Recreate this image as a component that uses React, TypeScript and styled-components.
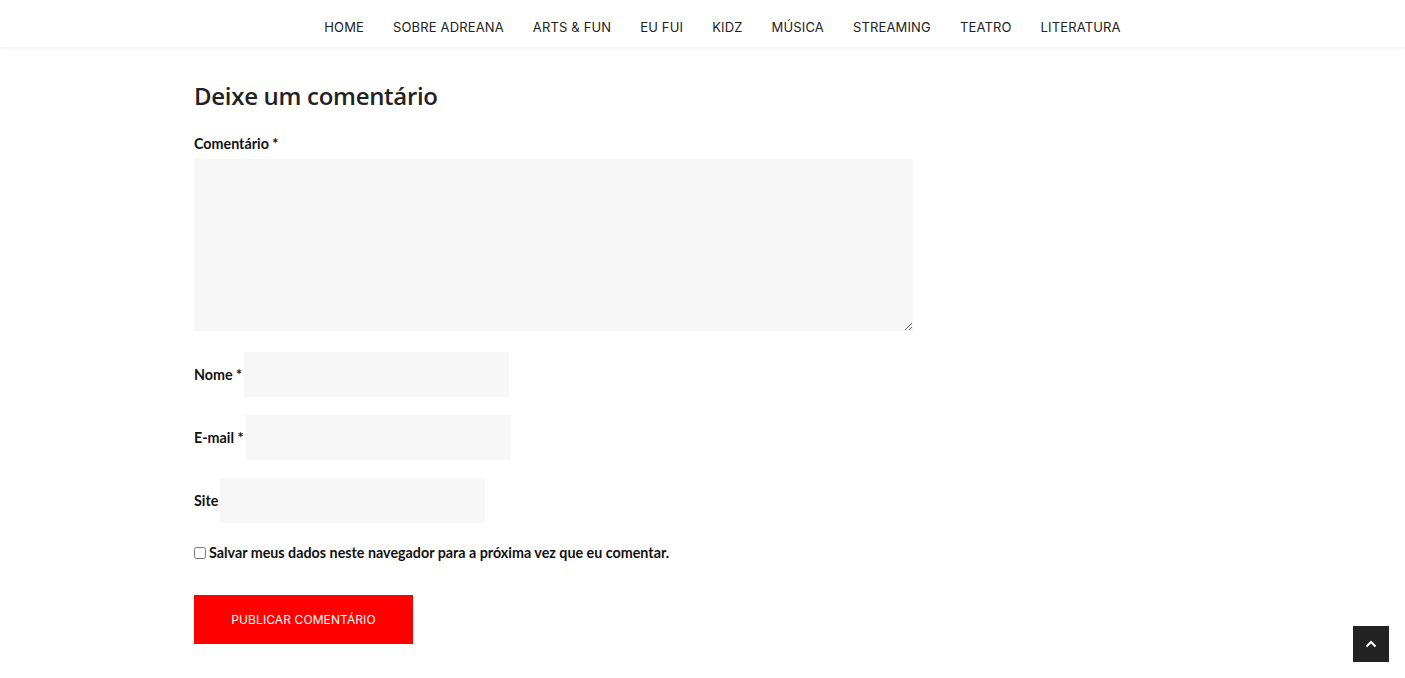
import React from "react";
import styled, { createGlobalStyle } from "styled-components";

const Global = createGlobalStyle`
  html, body { margin: 0; padding: 0; background: #fff; }
  body { font-family: Lato, "Liberation Sans", sans-serif; color: #111; }
  * { box-sizing: border-box; }
`;

const Header = styled.header`
  height: 47px;
  background: #fff;
  box-shadow: 0 1px 4px rgba(0,0,0,0.08);
  display: flex;
  justify-content: center;
  align-items: center;
  padding-left: 40px;
`;

const Nav = styled.nav`
  display: flex;
  gap: 29px;
  padding-top: 7px;
`;

const NavItem = styled.a`
  font-family: Inter, "Noto Sans", sans-serif;
  font-size: 13px;
  letter-spacing: 0.15px;
  color: #222;
  text-decoration: none;
  text-transform: uppercase;
`;

const Main = styled.main`
  width: 1017px;
  margin: 0 auto;
  padding-top: 32px;
  padding-bottom: 40px;
`;

const Title = styled.h3`
  font-family: "Open Sans", "Noto Sans", sans-serif;
  font-weight: 600;
  font-size: 24px;
  letter-spacing: -0.3px;
  color: #222;
  margin: 0 0 22px;
  line-height: 34px;
`;

const Field = styled.p`
  margin: 0 0 18px;
  font-size: 14.3px;
  font-weight: 700;
  display: flex;
  align-items: center;
`;

const BlockField = styled.div`
  display: flex;
  flex-direction: column;
  margin-bottom: 21px;
`;

const Label = styled.label`
  font-weight: 700;
  font-size: 14.3px;
  color: #111;
  margin-right: 2px;
`;

const BlockLabel = styled(Label)`
  margin-bottom: 7px;
  line-height: 17px;
`;

const TextArea = styled.textarea`
  width: 719px;
  height: 172px;
  background: #f7f7f7;
  border: none;
  outline: none;
  display: block;
`;

const Input = styled.input`
  width: 265px;
  height: 45px;
  background: #f7f7f7;
  border: none;
  outline: none;
`;

const CheckRow = styled.p`
  margin: 21px 0 34px;
  display: flex;
  align-items: center;
  font-size: 14.3px;
  font-weight: 700;
`;

const Check = styled.input`
  width: 12px;
  height: 12px;
  margin: 1px 3px 0 0;
`;

const Submit = styled.button`
  width: 219px;
  height: 49px;
  background: #ff0000;
  color: #fff;
  border: none;
  font-family: Inter, "Noto Sans", sans-serif;
  font-size: 12px;
  text-transform: uppercase;
  letter-spacing: 0.1px;
`;

const TopButton = styled.button`
  position: fixed;
  right: 16px;
  bottom: 16px;
  width: 36px;
  height: 36px;
  background: #222;
  border: none;
  display: flex;
  align-items: center;
  justify-content: center;
  padding: 0;
`;

const items = ["Home", "Sobre Adreana", "Arts & Fun", "Eu Fui", "Kidz", "Música", "Streaming", "Teatro", "Literatura"];

export default function App() {
  return (
    <>
      <Global />
      <Header>
        <Nav>
          {items.map((i) => (
            <NavItem key={i} href="#">{i}</NavItem>
          ))}
        </Nav>
      </Header>
      <Main>
        <Title>Deixe um comentário</Title>
        <BlockField>
          <BlockLabel>Comentário *</BlockLabel>
          <TextArea />
        </BlockField>
        <Field>
          <Label>Nome *</Label>
          <Input />
        </Field>
        <Field>
          <Label>E-mail *</Label>
          <Input />
        </Field>
        <Field>
          <Label>Site</Label>
          <Input />
        </Field>
        <CheckRow>
          <Check type="checkbox" />
          <span>Salvar meus dados neste navegador para a próxima vez que eu comentar.</span>
        </CheckRow>
        <Submit>Publicar comentário</Submit>
      </Main>
      <TopButton aria-label="Topo">
        <svg width="12" height="8" viewBox="0 0 12 8">
          <path d="M1.5 6.5 L6 2 L10.5 6.5" stroke="#fff" strokeWidth="2" fill="none" />
        </svg>
      </TopButton>
    </>
  );
}
